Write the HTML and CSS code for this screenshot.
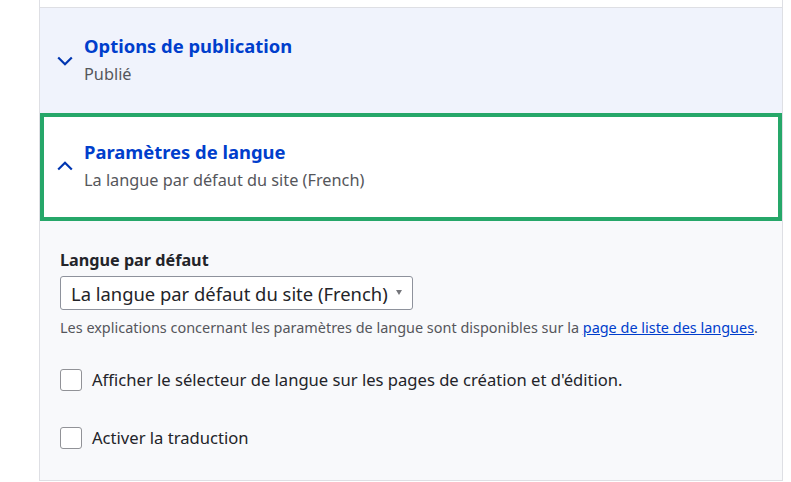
FILE: index.html
```html
<!DOCTYPE html>
<html lang="fr">
<head>
<meta charset="utf-8">
<link rel="stylesheet" href="styles.css">
</head>
<body>
<div class="wrap">
  <div class="prev"></div>
  <div class="item item-hover">
    <div class="summary">
      <svg class="chev" width="16" height="10" viewBox="0 0 16 10"><path d="M1.2 1.5 L8 8.2 L14.8 1.5" fill="none" stroke="#0036b1" stroke-width="2.2"/></svg>
      <div class="stext">
        <div class="title">Options de publication</div>
        <div class="sub">Publié</div>
      </div>
    </div>
  </div>
  <div class="item item-open">
    <div class="summary summary-focus">
      <svg class="chev chev-up" width="16" height="10" viewBox="0 0 16 10"><path d="M1.2 8.5 L8 1.8 L14.8 8.5" fill="none" stroke="#0036b1" stroke-width="2.2"/></svg>
      <div class="stext">
        <div class="title">Paramètres de langue</div>
        <div class="sub">La langue par défaut du site (French)</div>
      </div>
    </div>
    <div class="content">
      <div class="flabel">Langue par défaut</div>
      <div class="select"><span>La langue par défaut du site (French)</span><span class="arrow"></span></div>
      <div class="help">Les explications concernant les paramètres de langue sont disponibles sur la <a href="#">page de liste des langues</a>.</div>
      <label class="check"><span class="box"></span><span>Afficher le sélecteur de langue sur les pages de création et d'édition.</span></label>
      <label class="check check2"><span class="box"></span><span>Activer la traduction</span></label>
    </div>
  </div>
</div>
</body>
</html>
```
FILE: styles.css
```css
* { box-sizing: border-box; }
html, body { margin: 0; padding: 0; background: #fff; }
body { font-family: "Noto Sans", "Open Sans", sans-serif; color: #232429; }
.wrap {
  margin-left: 39px;
  width: 744px;
  border-left: 1px solid #dedfe4;
  border-right: 1px solid #dedfe4;
  border-bottom: 1px solid #dedfe4;
}
.prev { height: 8px; background: #fff; border-bottom: 1px solid #dedfe4; }
.item-hover { background: #f0f3fc; }
.summary {
  display: flex;
  align-items: center;
  height: 105px;
  padding-left: 17px;
}
.summary-focus {
  height: 108px;
  border: 4px solid #26a769;
  background: #fff;
  padding-left: 13px;
}
.chev { flex: none; margin-right: 11px; }
.chev-up { margin-bottom: 2px; }
.stext { display: flex; flex-direction: column; gap: 6px; margin-bottom: 3px; }
.title { font-size: 18.4px; line-height: 24px; font-weight: 700; color: #003ecc; }
.sub { font-size: 16.3px; line-height: 21px; color: #55565b; }
.content { background: #f8f9fb; padding: 29px 0 31px 20px; }
.flabel { font-size: 16.2px; line-height: 20px; font-weight: 700; color: #232429; }
.select {
  margin-top: 6px;
  width: 353px;
  height: 34px;
  border: 1px solid #8e929c;
  border-radius: 3px;
  background: #fff;
  display: flex;
  align-items: center;
  justify-content: space-between;
  padding: 0 10px 0 10px;
  font-size: 18.4px;
  color: #232429;
}
.arrow {
  width: 0;
  height: 0;
  border-left: 3.5px solid transparent;
  border-right: 3.5px solid transparent;
  border-top: 5px solid #75767b;
  margin-top: -1px;
}
.help { margin-top: 9px; font-size: 14.45px; line-height: 18px; color: #55565b; }
.help a { color: #003ecc; }
.check {
  display: flex;
  align-items: center;
  gap: 10px;
  margin-top: 32px;
  font-size: 16.6px;
  line-height: 22px;
  color: #232429;
}
.check2 { margin-top: 36px; }
.box {
  flex: none;
  width: 22px;
  height: 22px;
  border: 1px solid #919297;
  border-radius: 3px;
  background: #fff;
}
```
